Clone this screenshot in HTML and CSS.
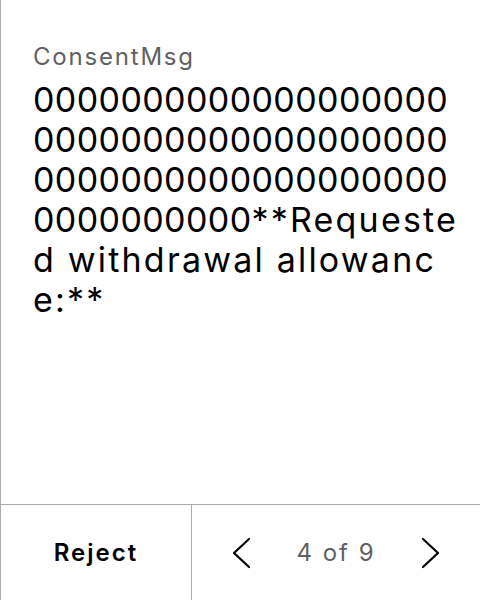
FILE: index.html
```html
<!DOCTYPE html>
<html>
<head>
<meta charset="utf-8">
<link rel="stylesheet" href="styles.css">
</head>
<body>
<div class="screen">
  <div class="content">
    <div class="title">ConsentMsg</div>
    <div class="message">0000000000<!--
-->0000000000<!--
-->0000000000<!--
-->0000000000<!--
-->0000000000<!--
-->0000000000<!--
-->0000000<!--
--><span class="words">**Requested withdrawal allowance:**</span></div>
  </div>
  <div class="footer">
    <div class="reject">Reject</div>
    <div class="pager">
      <svg class="chev" width="20" height="32" viewBox="0 0 20 32"><path d="M18 2 L3 16 L18 30" fill="none" stroke="#000" stroke-width="2.2" stroke-linecap="round" stroke-linejoin="round"/></svg>
      <span class="count">4 of 9</span>
      <svg class="chev" width="20" height="32" viewBox="0 0 20 32"><path d="M2 2 L17 16 L2 30" fill="none" stroke="#000" stroke-width="2.2" stroke-linecap="round" stroke-linejoin="round"/></svg>
    </div>
  </div>
</div>
</body>
</html>
```

FILE: styles.css
```css
html, body {
  margin: 0;
  padding: 0;
  background: #fff;
}
.screen {
  width: 480px;
  height: 600px;
  box-sizing: border-box;
  border-left: 1px solid #ababab;
  display: flex;
  flex-direction: column;
  font-family: Inter, "Noto Sans", sans-serif;
  color: #000;
}
.content {
  flex: 1;
  padding: 41px 17px 0 32px;
}
.title {
  font-size: 24px;
  line-height: 32px;
  letter-spacing: 1.8px;
  color: #616161;
  margin-bottom: 7px;
}
.message {
  font-size: 34px;
  line-height: 40px;
  letter-spacing: 0.4px;
  word-break: break-all;
}
.words {
  letter-spacing: 2.2px;
}
.footer {
  height: 96px;
  box-sizing: border-box;
  border-top: 1px solid #ababab;
  display: grid;
  grid-template-columns: 191px 1fr;
}
.reject {
  border-right: 1px solid #ababab;
  display: flex;
  align-items: center;
  justify-content: center;
  font-size: 24px;
  font-weight: 600;
  letter-spacing: 2px;
}
.pager {
  display: flex;
  align-items: center;
  justify-content: center;
  gap: 45px;
}
.count {
  font-size: 24px;
  letter-spacing: 2px;
  color: #616161;
}
```
